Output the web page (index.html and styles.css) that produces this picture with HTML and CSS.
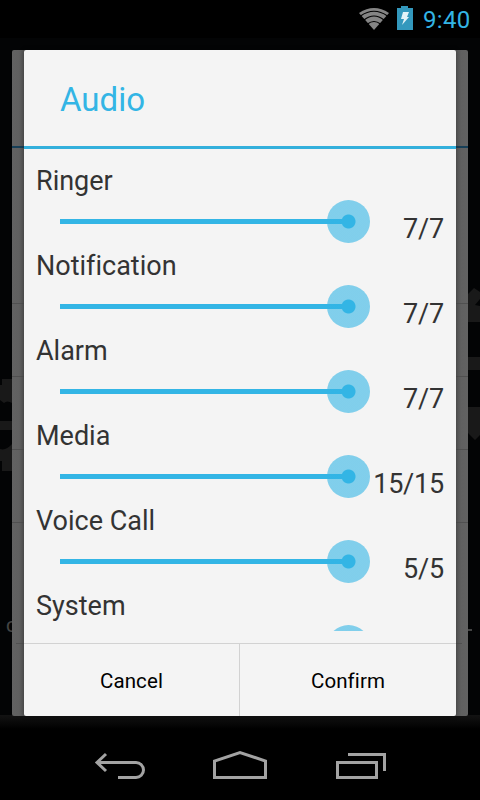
FILE: index.html
```
<!DOCTYPE html>
<html lang="en">
<head>
    <meta charset="UTF-8">
    <title>Audio</title>
    <link rel="stylesheet" href="styles.css">
</head>
<body>
    <div class="screen">
        <!-- dimmed home screen behind the dialog -->
        <svg class="backdrop" width="480" height="800" viewBox="0 0 480 800">
            <defs>
                <linearGradient id="side">
                    <stop offset="0" stop-color="#626262"/>
                    <stop offset=".016" stop-color="#606060"/>
                    <stop offset=".03" stop-color="#505050"/>
                    <stop offset=".97" stop-color="#555"/>
                    <stop offset=".985" stop-color="#606060"/>
                    <stop offset="1" stop-color="#626262"/>
                </linearGradient>
                <linearGradient id="bottom" x2="0" y2="1">
                    <stop offset="0" stop-color="#131313"/>
                    <stop offset="1" stop-color="#000"/>
                </linearGradient>
            </defs>
            <rect y="38" width="480" height="690" fill="#030405"/>
            <rect y="715" width="480" height="14" fill="url(#bottom)"/>
            <path d="M2 379h10v24q-5-3-8 0l-4-3v-15h2zM0 421h12v9H0zM0 449q6 2 12-5v27H2v-10H0z" fill="#191919"/>
            <path d="M468 294l6-6 6 4v7l-5 6 5 1v16h-12zM468 357h12v13h-12zM468 407h12v28l-5 5-7-7z" fill="#191919"/>
            <text class="backdrop-text" x="6" y="632">c</text>
            <rect x="468" y="629" width="4" height="2" fill="#444"/>
            <rect x="12" y="50" width="456" height="666" rx="2" fill="url(#side)"/>
            <rect x="12" y="146" width="456" height="2" fill="#173f57"/>
            <path d="M12 303.500h456M12 376.500h456M12 449.500h456M12 522.500h456M16 643.500h446" stroke="#505050"/>
        </svg>

        <div class="status-bar">
            <svg class="wifi" width="32" height="24" viewBox="0 0 32 24">
                <path d="M16 23L1 6Q16-4 31 6z" fill="#858585"/>
                <path d="M2.500 9Q16-.5 29.500 9M6 13Q16 5 26 13M9.500 17Q16 12 22.500 17" fill="none" stroke="#000" stroke-width="1.200"/>
            </svg>
            <svg class="battery" width="16" height="24" viewBox="0 0 16 24">
                <path d="M0 2h4V0h7v2h5v22H0z" fill="#3398bd"/>
                <path d="M6 6h6l-2 5h2L5 19l2-6H4z" fill="#e4f3f8"/>
            </svg>
            <span class="clock">9:40</span>
        </div>

        <div class="dialog">
            <div class="dialog-title">Audio</div>
            <div class="volume-list">
                <div class="volume">
                    <div class="label">Ringer</div>
                    <div class="control">
                        <div class="slider"><div class="thumb"></div></div>
                        <div class="value">7/7</div>
                    </div>
                </div>
                <div class="volume">
                    <div class="label">Notification</div>
                    <div class="control">
                        <div class="slider"><div class="thumb"></div></div>
                        <div class="value">7/7</div>
                    </div>
                </div>
                <div class="volume">
                    <div class="label">Alarm</div>
                    <div class="control">
                        <div class="slider"><div class="thumb"></div></div>
                        <div class="value">7/7</div>
                    </div>
                </div>
                <div class="volume">
                    <div class="label">Media</div>
                    <div class="control">
                        <div class="slider"><div class="thumb"></div></div>
                        <div class="value">15/15</div>
                    </div>
                </div>
                <div class="volume">
                    <div class="label">Voice Call</div>
                    <div class="control">
                        <div class="slider"><div class="thumb"></div></div>
                        <div class="value">5/5</div>
                    </div>
                </div>
                <div class="volume">
                    <div class="label">System</div>
                    <div class="control">
                        <div class="slider"><div class="thumb"></div></div>
                    </div>
                </div>
            </div>
            <div class="buttons">
                <button class="btn cancel">Cancel</button>
                <button class="btn">Confirm</button>
            </div>
        </div>

        <div class="nav-bar">
            <svg width="52" height="30" viewBox="0 0 52 30">
                <path d="M3 12.500h39a7.500 7.500 0 0 1 0 15H24M12 4L3 12.500L12 21" fill="none" stroke="#a3a3a3" stroke-width="3"/>
            </svg>
            <svg width="54" height="30" viewBox="0 0 54 30">
                <path d="M1.500 27.500V11L27 2.500L52.500 11v16.500z" fill="none" stroke="#a3a3a3" stroke-width="3"/>
            </svg>
            <svg width="52" height="30" viewBox="-1 0 52 30">
                <path d="M2.500 12.500h39v15h-39zM13 4.500h36.500V21" fill="none" stroke="#a3a3a3" stroke-width="3"/>
            </svg>
        </div>
    </div>
</body>
</html>
```
FILE: styles.css
```
body {
    margin: 0;
    background: #000;
    font-family: Roboto, sans-serif;
}
.screen {
    position: relative;
    display: flex;
    flex-direction: column;
    width: 480px;
    height: 800px;
    overflow: hidden;
}
.backdrop {
    position: absolute;
    top: 0;
    left: 0;
}
.backdrop-text {
    font-size: 20px;
    fill: #444;
}

/* status bar */
.status-bar {
    position: relative;
    display: flex;
    justify-content: flex-end;
    height: 38px;
    padding: 0 9px 0 0;
    box-sizing: border-box;
}
.wifi {
    margin: 7px 7px 0 0;
}
.battery {
    margin: 6px 10px 0 0;
}
.clock {
    width: 48px;
    color: #33b5e5;
    font-size: 24px;
    line-height: 40px;
    letter-spacing: 0.3px;
}

/* dialog */
.dialog {
    position: relative;
    display: flex;
    flex-direction: column;
    width: 432px;
    height: 666px;
    margin: 12px 24px 0;
    border-radius: 2px;
    background: #f4f4f4;
    box-shadow: 0 0 5px rgba(0, 0, 0, 0.3);
}
.dialog-title {
    height: 96px;
    padding-left: 36px;
    border-bottom: 3px solid #33b0dc;
    color: #33b5e5;
    font-size: 33px;
    line-height: 99px;
}
.volume-list {
    height: 467px;
    padding-top: 15px;
    overflow: hidden;
}
.volume {
    height: 85px;
    padding: 0 12px;
}
.label {
    height: 34px;
    color: #333;
    font-size: 27px;
    line-height: 34px;
    font-variant-ligatures: none;
}
.control {
    display: flex;
    justify-content: space-between;
    height: 51px;
}
.slider {
    display: flex;
    flex: none;
    align-items: center;
    justify-content: flex-end;
    width: 288px;
    height: 47px;
    margin-left: 24px;
    background: linear-gradient(#33b5e5, #33b5e5) center / 100% 5px no-repeat;
}
.thumb {
    flex: none;
    width: 43px;
    height: 43px;
    margin-right: -21.500px;
    border-radius: 50%;
    background:
        radial-gradient(circle, #33b5e5 6.500px, transparent 7.500px),
        linear-gradient(rgba(51, 181, 229, 0.6), rgba(51, 181, 229, 0.6));
}
.value {
    color: #333;
    font-size: 27px;
    line-height: 63px;
    letter-spacing: -0.2px;
}
.buttons {
    display: flex;
    height: 72px;
    margin-top: 12px;
    border-top: 1px solid #d2d2d2;
}
.btn {
    flex: 1;
    padding: 2px 0 0;
    border: 0;
    background: none;
    color: #000;
    font-family: inherit;
    font-size: 20.500px;
    letter-spacing: 0.1px;
}
.cancel {
    flex: 0 0 216px;
    border-right: 1px solid #d2d2d2;
}

/* navigation bar */
.nav-bar {
    position: relative;
    display: flex;
    justify-content: space-between;
    margin-top: 34px;
    padding: 0 94px;
}
```
